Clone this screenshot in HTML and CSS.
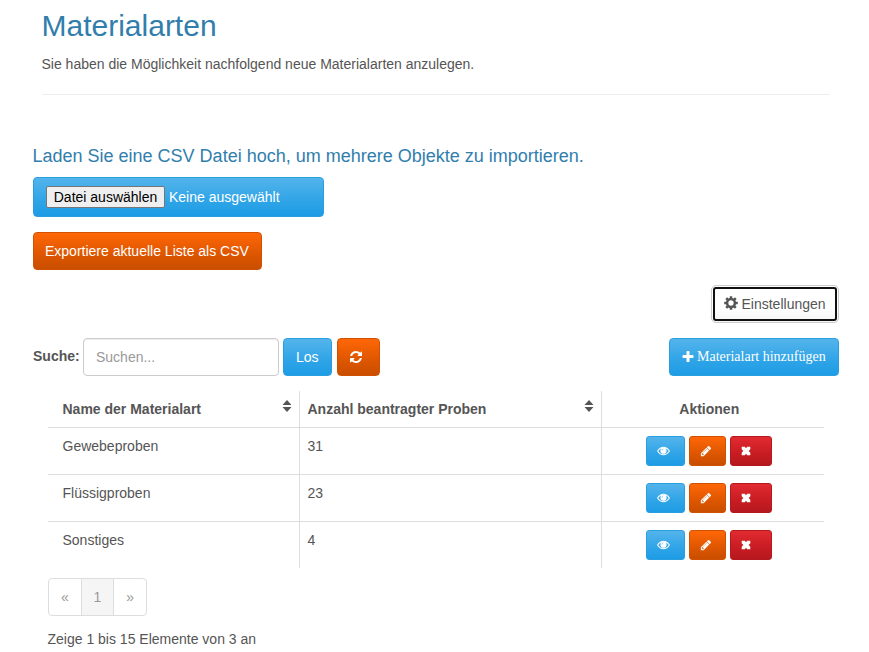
FILE: index.html
```html
<!DOCTYPE html>
<html lang="de">
<head>
<meta charset="utf-8">
<title>Materialarten</title>
<link rel="stylesheet" href="styles.css">
</head>
<body>
<svg class="sprite" aria-hidden="true">
<symbol id="cog" viewBox="0 0 14 14"><circle cx="7" cy="7" r="3.9" fill="none" stroke="currentColor" stroke-width="2.5"/><path d="M7 .2V3M7 11v2.8M.2 7H3M11 7h2.8M2.2 2.2l2 2M9.8 9.8l2 2M11.8 2.2l-2 2M4.2 9.8l-2 2" fill="none" stroke="currentColor" stroke-width="2.5"/></symbol>
<symbol id="refresh" viewBox="0 0 1792 1792"><path d="M1639 1056q0 5-1 7-64 268-268 434.5t-478 166.5q-146 0-282.5-55t-243.5-157l-129 129q-19 19-45 19t-45-19-19-45v-448q0-26 19-45t45-19h448q26 0 45 19t19 45-19 45l-137 137q71 66 161 102t187 36q134 0 250-65t186-179q11-17 53-117 8-23 30-23h192q13 0 22.5 9.5t9.5 22.5zm25-800v448q0 26-19 45t-45 19h-448q-26 0-45-19t-19-45 19-45l138-138q-148-137-349-137-134 0-250 65t-186 179q-11 17-53 117-8 23-30 23h-199q-13 0-22.5-9.5t-9.5-22.5v-7q65-268 270-434.5t480-166.5q146 0 284 55.5t245 156.5l130-129q19-19 45-19t45 19 19 45z"/></symbol>
<symbol id="plus" viewBox="0 0 1792 1792"><path d="M1600 736v192q0 40-28 68t-68 28h-416v416q0 40-28 68t-68 28h-192q-40 0-68-28t-28-68v-416h-416q-40 0-68-28t-28-68v-192q0-40 28-68t68-28h416v-416q0-40 28-68t68-28h192q40 0 68 28t28 68v416h416q40 0 68 28t28 68z"/></symbol>
<symbol id="pencil" viewBox="0 0 1792 1792"><path d="M491 1536l91-91-235-235-91 91v107h128v128h107zm523-928q0-22-22-22-10 0-17 7l-542 542q-7 7-7 17 0 22 22 22 10 0 17-7l542-542q7-7 7-17zm-54-192l416 416-832 832h-416v-416zm683 96q0 53-37 90l-166 166-416-416 166-165q36-38 90-38 53 0 91 38l235 234q37 39 37 91z"/></symbol>
<symbol id="eye" viewBox="0 0 13 12"><path d="M.6 6Q3 2.2 6.5 2.2T12.4 6Q10 9.8 6.5 9.8T.6 6z" fill="none" stroke="currentColor" stroke-width="1.1"/><circle cx="6.5" cy="5.7" r="3.1"/><path d="M4.9 5.6Q5 4.2 6.4 4" fill="none" stroke="#54b0ea" stroke-width=".6"/></symbol>
<symbol id="times" viewBox="0 0 10 10"><path d="M.7.7h3.1L5 2.2 6.2.7h3.1v2.6L7.7 5l1.6 1.7v2.6H6.2L5 7.8 3.8 9.3H.7V6.7L2.3 5 .7 3.3z"/></symbol>
<symbol id="sort" viewBox="0 0 10 12"><path d="M5 0L9.5 5H.5zM5 12L.5 7h9z"/></symbol>
</svg>
<header class="page-header">
  <h1>Materialarten</h1>
  <p>Sie haben die Möglichkeit nachfolgend neue Materialarten anzulegen.</p>
</header>
<main>
  <h2>Laden Sie eine CSV Datei hoch, um mehrere Objekte zu importieren.</h2>
  <div class="btn info file"><button class="choose">Datei auswählen</button><span>Keine ausgewählt</span></div>
  <div class="btn warning export">Exportiere aktuelle Liste als CSV</div>
  <div class="settings-row"><button class="settings"><svg class="icon"><use href="#cog"/></svg>Einstellungen</button></div>
  <div class="toolbar">
    <label for="q">Suche:</label>
    <input id="q" type="text" placeholder="Suchen...">
    <button class="btn info go">Los</button>
    <button class="btn warning reload"><svg class="icon"><use href="#refresh"/></svg></button>
    <a class="btn info add"><svg class="icon"><use href="#plus"/></svg>Materialart hinzufügen</a>
  </div>
  <table>
    <thead><tr>
      <th><div class="head">Name der Materialart<svg class="sort"><use href="#sort"/></svg></div></th>
      <th><div class="head">Anzahl beantragter Proben<svg class="sort"><use href="#sort"/></svg></div></th>
      <th class="center">Aktionen</th>
    </tr></thead>
    <tbody>
      <tr><td>Gewebeproben</td><td>31</td><td><div class="actions"><a class="btn info view"><svg class="icon"><use href="#eye"/></svg></a><a class="btn warning edit"><svg class="icon"><use href="#pencil"/></svg></a><a class="btn danger del"><svg class="icon"><use href="#times"/></svg></a></div></td></tr>
      <tr><td>Flüssigproben</td><td>23</td><td><div class="actions"><a class="btn info view"><svg class="icon"><use href="#eye"/></svg></a><a class="btn warning edit"><svg class="icon"><use href="#pencil"/></svg></a><a class="btn danger del"><svg class="icon"><use href="#times"/></svg></a></div></td></tr>
      <tr><td>Sonstiges</td><td>4</td><td><div class="actions"><a class="btn info view"><svg class="icon"><use href="#eye"/></svg></a><a class="btn warning edit"><svg class="icon"><use href="#pencil"/></svg></a><a class="btn danger del"><svg class="icon"><use href="#times"/></svg></a></div></td></tr>
    </tbody>
  </table>
  <nav class="pagination"><span>«</span><span class="current">1</span><span>»</span></nav>
  <p class="summary">Zeige 1 bis 15 Elemente von 3 an</p>
</main>
</body>
</html>
```
FILE: styles.css
```css
* { box-sizing: border-box; }
body {
  margin: 0;
  height: 652px;
  overflow: hidden;
  background: #fff;
  color: #555;
  font: 14px/20px "Liberation Sans", Arial, sans-serif;
}
.sprite { display: none; }
.icon { width: 14px; height: 14px; fill: currentColor; flex: none; }
h1, h2, p { margin: 0; font-weight: normal; }
h1, h2 { color: #317eac; }
.page-header {
  margin: 0 39px 0 41.5px;
  height: 95px;
  padding-top: 9px;
  border-bottom: 1px solid #eee;
}
h1 { font-size: 30px; line-height: 33px; margin-bottom: 12px; }
main { padding: 51px 30px 0 33px; }
h2 { font-size: 18px; line-height: 20px; margin: 0 0 11px -.5px; }
button { font: inherit; }
.btn {
  display: flex;
  align-items: center;
  height: 38px;
  padding: 0 12px;
  border: 1px solid;
  border-radius: 4px;
  color: #fff;
  white-space: nowrap;
}
.info { background: linear-gradient(#54b4eb, #2fa4e7 60%, #1d9ce5); border-color: #2a9fe0; }
.warning { background: linear-gradient(#ff6707, #dd5600 60%, #c94e00); border-color: #d05100; }
.danger { background: linear-gradient(#e12b31, #c71c22 60%, #b5191f); border-color: #b5191f; }
.file { width: 291px; height: 40px; margin-bottom: 15px; gap: 4px; }
.choose {
  width: 119px;
  height: 22px;
  padding: 0;
  border: 1px solid #767676;
  border-radius: 2px;
  background: #efefef;
  color: #000;
}
.export { width: 229px; padding: 0 11px; }
.settings-row { display: flex; justify-content: flex-end; margin-top: 15px; }
.settings {
  display: flex;
  align-items: center;
  gap: 4px;
  width: 128px;
  height: 38px;
  margin-bottom: 15px;
  padding: 0 0 0 11.5px;
  border: 1px solid #ccc;
  border-radius: 5px;
  background: linear-gradient(#fff 60%, #f5f5f5);
  outline: 2px solid #101010;
  outline-offset: -4px;
  color: #555;
}
.settings .icon { margin-top: -2px; }
.toolbar { display: flex; }
.toolbar label { width: 50px; padding-top: 8px; font-weight: bold; }
.toolbar input {
  width: 196px;
  height: 38px;
  padding: 0 12px;
  border: 1px solid #ccc;
  border-radius: 4px;
  font: inherit;
  box-shadow: inset 0 1px 1px rgba(0, 0, 0, .075);
}
.toolbar input::placeholder { color: #999; }
.go { width: 49px; margin-left: 4px; }
.reload { width: 43px; margin-left: 5px; padding: 0 11px; }
.add { width: 170px; margin-left: auto; padding: 0 11px; gap: 2px; font-family: "Liberation Serif", serif; }
table {
  width: 776px;
  margin: 15px 0 0 15px;
  table-layout: fixed;
  border-collapse: separate;
  border-spacing: 0;
}
th, td { text-align: left; vertical-align: top; border-right: 1px solid #ddd; }
th { height: 37px; padding: 8px 7px 0 7.5px; border-bottom: 1px solid #ddd; }
th:nth-child(1) { width: 252px; }
th:nth-child(2) { width: 302px; }
th:first-child, td:first-child { padding-left: 14.5px; }
th:last-child, td:last-child { border-right: 0; }
.head { display: flex; justify-content: space-between; }
.sort { width: 10px; height: 12px; margin-top: 1px; fill: #555; }
th.center { text-align: center; padding-right: 15px; }
td { height: 47px; padding: 8px 8px 0 7.5px; border-bottom: 1px solid #ddd; }
tr:last-child td { height: 46px; border-bottom: 0; }
.actions { display: flex; gap: 4px; padding-left: 36.5px; margin-bottom: 8px; }
.actions .btn { height: 30px; border-radius: 3px; padding: 0 10px; }
.actions .icon { width: 12px; height: 12px; }
.actions .view .icon { width: 13px; }
.actions .del .icon { width: 10px; height: 10px; }
.view { width: 39px; }
.edit { width: 37px; }
.del { width: 42px; }
.pagination {
  display: flex;
  width: 99px;
  height: 38px;
  margin: 10px 0 13px 15px;
  border: 1px solid #ddd;
  border-radius: 4px;
  overflow: hidden;
  color: #999;
}
.pagination span { flex: 1; text-align: center; line-height: 36px; }
.pagination .current { background: #f5f5f5; border: solid #ddd; border-width: 0 1px; }
.summary { margin-left: 14.5px; }
```
